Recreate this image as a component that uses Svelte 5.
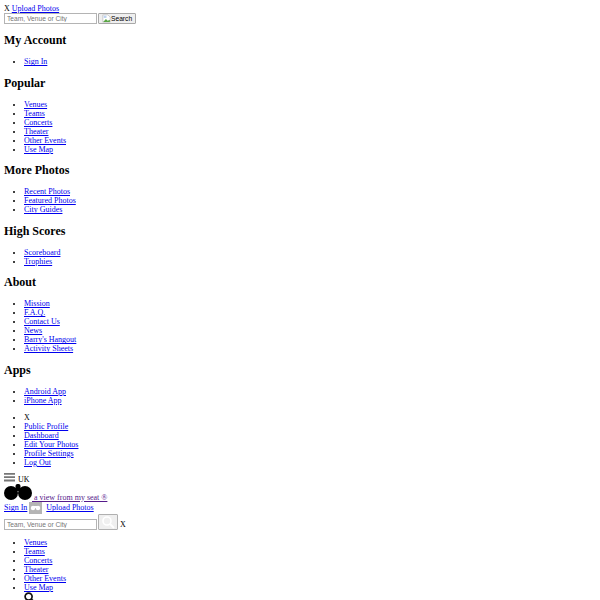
<script>
	const sections = [
		{ title: 'My Account', links: ['Sign In'] },
		{ title: 'Popular', links: ['Venues', 'Teams', 'Concerts', 'Theater', 'Other Events', 'Use Map'] },
		{ title: 'More Photos', links: ['Recent Photos', 'Featured Photos', 'City Guides'] },
		{ title: 'High Scores', links: ['Scoreboard', 'Trophies'] },
		{ title: 'About', links: ['Mission', 'F.A.Q.', 'Contact Us', 'News', "Barry's Hangout", 'Activity Sheets'] },
		{ title: 'Apps', links: ['Android App', 'iPhone App'] }
	];
	const profile = ['Public Profile', 'Dashboard', 'Edit Your Photos', 'Profile Settings', 'Log Out'];
	const mainNav = ['Venues', 'Teams', 'Concerts', 'Theater', 'Other Events', 'Use Map'];
</script>

<div class="page">
	<div>X <a href="#upload">Upload Photos</a></div>
	<form class="search">
		<input type="text" placeholder="Team, Venue or City" />
		<button type="button" class="search-btn">
			<svg class="broken" width="9" height="9" viewBox="0 0 16 16">
				<path d="M1.5 1.5h9l4 4v9h-13z" fill="#fff" stroke="#a9a9a9" />
				<path d="M2 14l5-5 3 3 4-2v4z" fill="#5aa545" />
				<path d="M3 3h5v4H3z" fill="#bcd3f0" />
			</svg>Search
		</button>
	</form>

	{#each sections as section}
		<h2>{section.title}</h2>
		<ul>
			{#each section.links as link}
				<li><a href="#link">{link}</a></li>
			{/each}
		</ul>
	{/each}

	<ul>
		<li>X</li>
		{#each profile as link}
			<li><a href="#link">{link}</a></li>
		{/each}
	</ul>

	<div class="menu-row">
		<svg class="burger" width="11" height="9" viewBox="0 0 11 9">
			<path d="M0 0h11v1.8H0zM0 3.3h11v1.8H0zM0 6.6h11v1.8H0z" fill="#777" />
		</svg>
		<span>UK</span>
	</div>
	<div>
		<a class="visited" href="#home">
			<svg width="28" height="16" viewBox="0 0 28 16">
				<circle cx="7" cy="9" r="7" fill="#000" />
				<circle cx="21" cy="9" r="7" fill="#000" />
				<rect x="11.5" y="0" width="5" height="7" rx="2" fill="#000" />
			</svg>
			a view from my seat ®
		</a>
	</div>
	<div class="sign-row">
		<a href="#signin">Sign In</a>
		<span class="thumb">
			<svg width="13" height="12" viewBox="0 0 13 12">
				<circle cx="4" cy="6" r="2.2" fill="#fff" />
				<circle cx="9" cy="6" r="2.2" fill="#fff" />
				<path d="M5 4h3v2H5z" fill="#fff" />
			</svg>
		</span>
		<a href="#upload">Upload Photos</a>
	</div>
	<form class="search second">
		<input type="text" placeholder="Team, Venue or City" />
		<button type="button" class="mag-btn" aria-label="Search">
			<svg width="14" height="14" viewBox="0 0 14 14">
				<circle cx="6" cy="6" r="4" fill="none" stroke="#fff" stroke-width="1.6" />
				<path d="M9 9l4 4" stroke="#fff" stroke-width="1.8" />
			</svg>
		</button>
		<span class="close">X</span>
	</form>
	<ul class="main-nav">
		{#each mainNav as link}
			<li><a href="#link">{link}</a></li>
		{/each}
		<li>
			<svg width="11" height="11" viewBox="0 0 11 11">
				<circle cx="4.6" cy="4.6" r="3.5" fill="none" stroke="#111" stroke-width="1.7" />
				<path d="M7 7l3.5 3.5" stroke="#111" stroke-width="2" />
			</svg>
		</li>
	</ul>
</div>

<style>
	:global(body) {
		margin: 0;
		background: #fff;
	}
	.page {
		font-family: 'Liberation Serif', 'Times New Roman', serif;
		font-size: 8px;
		color: #000;
		padding: 4px 4px 0;
		height: 596px;
		overflow: hidden;
	}
	a {
		color: #00e;
	}
	a.visited {
		color: #551a8b;
	}
	.search {
		display: flex;
		align-items: flex-end;
		gap: 1px;
		margin-bottom: -0.25px;
	}
	input {
		box-sizing: border-box;
		width: 93px;
		height: 11px;
		padding: 0 2px;
		border: 1px solid #b4b4b4;
		font-family: 'Liberation Sans', Arial, sans-serif;
		font-size: 6.67px;
	}
	input::placeholder {
		color: #757575;
	}
	.search-btn {
		display: flex;
		align-items: center;
		box-sizing: border-box;
		height: 11px;
		padding: 0 3px;
		border: 1px solid #a8a8a8;
		border-radius: 1px;
		background: #efefef;
		font-family: 'Liberation Sans', Arial, sans-serif;
		font-size: 6.67px;
		color: #000;
	}
	h2 {
		font-size: 12px;
		margin: 9.5px 0 9px;
	}
	ul {
		padding-left: 20px;
	}
	.menu-row {
		display: flex;
		align-items: flex-start;
		gap: 3px;
	}
	.burger {
		margin-top: -2px;
	}
	.sign-row {
		display: flex;
		align-items: center;
		gap: 2px;
	}
	.thumb {
		display: flex;
		background: #b5b5b5;
		margin-right: 2px;
	}
	.mag-btn {
		box-sizing: border-box;
		width: 20px;
		height: 16px;
		padding: 0;
		border: 1px solid #b0b0b0;
		border-radius: 1px;
		background: #efefef;
	}
	.close {
		margin: 0 0 1px 1px;
	}
	.main-nav {
		margin: 8px 0 0;
	}
</style>
